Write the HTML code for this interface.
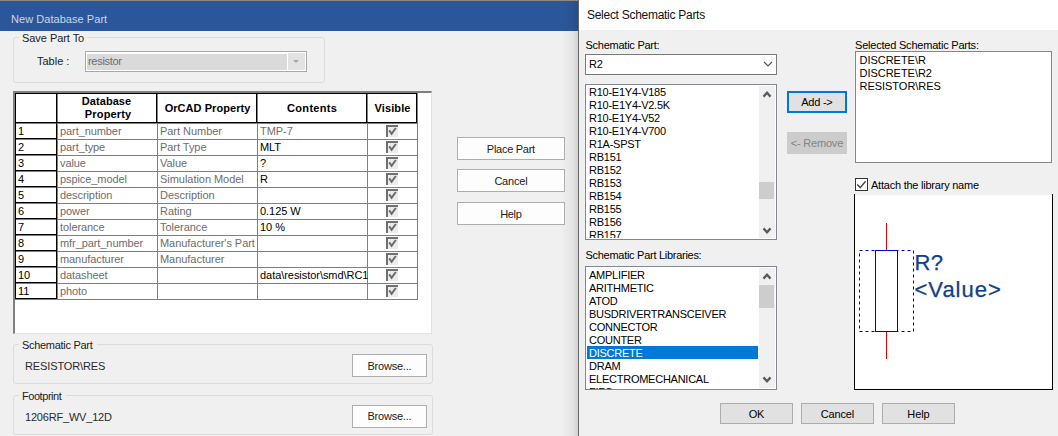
<!DOCTYPE html>
<html><head><meta charset="utf-8">
<style>
html,body{margin:0;padding:0;}
body{width:1058px;height:436px;overflow:hidden;position:relative;background:#f0f0f0;font-family:"Liberation Sans",sans-serif;font-size:11px;color:#000;}
div{position:absolute;box-sizing:border-box;}
svg{position:absolute;}
.t{white-space:nowrap;}
.gb{border:1px solid #dcdcdc;border-radius:3px;}
</style></head>
<body>

<div style="left:0px;top:0px;width:578px;height:1px;background:#8a8a8a;"></div>
<div style="left:0px;top:1px;width:578px;height:30px;background:#2b579a;"></div>
<div class="t" style="left:11px;top:12.86px;font-size:11px;color:#cdd6e5;line-height:13px;height:13px;letter-spacing:0.05px;">New Database Part</div>
<div style="left:0px;top:31px;width:578px;height:405px;background:#f0f0f0;"></div>
<div style="left:560px;top:1px;width:18px;height:435px;background:linear-gradient(to right,rgba(0,0,0,0) 0%,rgba(0,0,0,0.05) 70%,rgba(0,0,0,0.13) 100%);"></div>
<div class="gb" style="left:13px;top:37px;width:312px;height:46px;"></div>
<div style="left:19px;top:34px;width:68px;height:8px;background:#f0f0f0;"></div>
<div class="t" style="left:22px;top:31.86px;font-size:11px;color:#222;line-height:13px;height:13px;letter-spacing:-0.05px;">Save Part To</div>
<div class="t" style="left:37px;top:54.86px;font-size:11px;color:#222;line-height:13px;height:13px;letter-spacing:0px;">Table :</div>
<div style="left:85px;top:51px;width:222px;height:21px;background:#fff;border:1px solid #a9a9a9;"></div>
<div style="left:87px;top:54px;width:200px;height:16px;background:#dadada;"></div>
<div style="left:288px;top:53px;width:17px;height:17px;background:#e3e3e3;"></div>
<div style="left:293px;top:60px;width:0;height:0;border-left:3.5px solid transparent;border-right:3.5px solid transparent;border-top:3.5px solid #a8a8a8;"></div>
<div class="t" style="left:88px;top:54.86px;font-size:11px;color:#6d6d6d;line-height:13px;height:13px;letter-spacing:-0.3px;">resistor</div>
<div style="left:13px;top:91px;width:419px;height:243px;background:#fff;border-left:2px solid #808080;border-top:2px solid #808080;border-right:1px solid #e3e3e3;border-bottom:1px solid #e3e3e3;"></div>
<div style="left:15px;top:123px;width:403px;height:1px;background:#808080;"></div>
<div style="left:15px;top:139px;width:403px;height:1px;background:#808080;"></div>
<div style="left:15px;top:155px;width:403px;height:1px;background:#808080;"></div>
<div style="left:15px;top:171px;width:403px;height:1px;background:#808080;"></div>
<div style="left:15px;top:187px;width:403px;height:1px;background:#808080;"></div>
<div style="left:15px;top:203px;width:403px;height:1px;background:#808080;"></div>
<div style="left:15px;top:219px;width:403px;height:1px;background:#808080;"></div>
<div style="left:15px;top:235px;width:403px;height:1px;background:#808080;"></div>
<div style="left:15px;top:251px;width:403px;height:1px;background:#808080;"></div>
<div style="left:15px;top:267px;width:403px;height:1px;background:#808080;"></div>
<div style="left:15px;top:283px;width:403px;height:1px;background:#808080;"></div>
<div style="left:15px;top:299px;width:403px;height:1px;background:#808080;"></div>
<div style="left:57px;top:93px;width:1px;height:207px;background:#808080;"></div>
<div style="left:157px;top:93px;width:1px;height:207px;background:#808080;"></div>
<div style="left:257px;top:93px;width:1px;height:207px;background:#808080;"></div>
<div style="left:367px;top:93px;width:1px;height:207px;background:#808080;"></div>
<div style="left:417px;top:93px;width:1px;height:207px;background:#808080;"></div>
<div style="left:15px;top:93px;width:402px;height:1px;background:#000;"></div>
<div style="left:15px;top:93px;width:1px;height:206px;background:#000;"></div>
<div style="left:15px;top:122px;width:402px;height:1px;background:#000;"></div>
<div style="left:56px;top:93px;width:1px;height:30px;background:#000;"></div>
<div style="left:156px;top:93px;width:1px;height:30px;background:#000;"></div>
<div style="left:256px;top:93px;width:1px;height:30px;background:#000;"></div>
<div style="left:366px;top:93px;width:1px;height:30px;background:#000;"></div>
<div style="left:416px;top:93px;width:1px;height:30px;background:#000;"></div>
<div style="left:56px;top:123px;width:1px;height:176px;background:#000;"></div>
<div style="left:15px;top:138px;width:42px;height:1px;background:#000;"></div>
<div style="left:15px;top:154px;width:42px;height:1px;background:#000;"></div>
<div style="left:15px;top:170px;width:42px;height:1px;background:#000;"></div>
<div style="left:15px;top:186px;width:42px;height:1px;background:#000;"></div>
<div style="left:15px;top:202px;width:42px;height:1px;background:#000;"></div>
<div style="left:15px;top:218px;width:42px;height:1px;background:#000;"></div>
<div style="left:15px;top:234px;width:42px;height:1px;background:#000;"></div>
<div style="left:15px;top:250px;width:42px;height:1px;background:#000;"></div>
<div style="left:15px;top:266px;width:42px;height:1px;background:#000;"></div>
<div style="left:15px;top:282px;width:42px;height:1px;background:#000;"></div>
<div style="left:15px;top:298px;width:42px;height:1px;background:#000;"></div>
<div class="t" style="left:46.5px;width:120px;text-align:center;top:95.16px;font-size:11px;line-height:13px;height:13px;color:#000;font-weight:bold;letter-spacing:0.05px;text-indent:0.05px">Database</div>
<div class="t" style="left:48px;width:120px;text-align:center;top:108.36px;font-size:11px;line-height:13px;height:13px;color:#000;font-weight:bold;letter-spacing:0.15px;text-indent:0.15px">Property</div>
<div class="t" style="left:147.5px;width:120px;text-align:center;top:101.86px;font-size:11px;line-height:13px;height:13px;color:#000;font-weight:bold;letter-spacing:0.05px;text-indent:0.05px">OrCAD Property</div>
<div class="t" style="left:252px;width:120px;text-align:center;top:101.86px;font-size:11px;line-height:13px;height:13px;color:#000;font-weight:bold;letter-spacing:0.3px;text-indent:0.3px">Contents</div>
<div class="t" style="left:332.5px;width:120px;text-align:center;top:101.86px;font-size:11px;line-height:13px;height:13px;color:#000;font-weight:bold;letter-spacing:0.1px;text-indent:0.1px">Visible</div>
<div class="t" style="left:18px;top:124.86px;font-size:11px;color:#000;line-height:13px;height:13px;letter-spacing:0px;">1</div>
<div class="t" style="left:60px;top:124.86px;font-size:11px;color:#6d6d6d;line-height:13px;height:13px;letter-spacing:-0.08px;">part_number</div>
<div class="t" style="left:160px;top:124.86px;font-size:11px;color:#6d6d6d;line-height:13px;height:13px;letter-spacing:-0.04px;">Part Number</div>
<div class="t" style="left:260px;top:124.86px;font-size:11px;color:#6d6d6d;line-height:13px;height:13px;letter-spacing:-0.05px;">TMP-7</div>
<div style="left:386px;top:125px;width:12px;height:12px;background:#ececec;border-left:2px solid #707070;border-top:2px solid #707070;"></div>
<svg style="left:386px;top:125px" width="12" height="12"><path d="M3.2 5.2 L5.6 8.8 L9.8 3" stroke="#6a6a6a" stroke-width="2" fill="none"/></svg>
<div class="t" style="left:18px;top:140.86px;font-size:11px;color:#000;line-height:13px;height:13px;letter-spacing:0px;">2</div>
<div class="t" style="left:60px;top:140.86px;font-size:11px;color:#6d6d6d;line-height:13px;height:13px;letter-spacing:-0.08px;">part_type</div>
<div class="t" style="left:160px;top:140.86px;font-size:11px;color:#6d6d6d;line-height:13px;height:13px;letter-spacing:-0.04px;">Part Type</div>
<div class="t" style="left:260px;top:140.86px;font-size:11px;color:#000;line-height:13px;height:13px;letter-spacing:-0.05px;">MLT</div>
<div style="left:386px;top:141px;width:12px;height:12px;background:#ececec;border-left:2px solid #707070;border-top:2px solid #707070;"></div>
<svg style="left:386px;top:141px" width="12" height="12"><path d="M3.2 5.2 L5.6 8.8 L9.8 3" stroke="#6a6a6a" stroke-width="2" fill="none"/></svg>
<div class="t" style="left:18px;top:156.86px;font-size:11px;color:#000;line-height:13px;height:13px;letter-spacing:0px;">3</div>
<div class="t" style="left:60px;top:156.86px;font-size:11px;color:#6d6d6d;line-height:13px;height:13px;letter-spacing:-0.08px;">value</div>
<div class="t" style="left:160px;top:156.86px;font-size:11px;color:#6d6d6d;line-height:13px;height:13px;letter-spacing:-0.04px;">Value</div>
<div class="t" style="left:260px;top:156.86px;font-size:11px;color:#000;line-height:13px;height:13px;letter-spacing:-0.05px;">?</div>
<div style="left:386px;top:157px;width:12px;height:12px;background:#ececec;border-left:2px solid #707070;border-top:2px solid #707070;"></div>
<svg style="left:386px;top:157px" width="12" height="12"><path d="M3.2 5.2 L5.6 8.8 L9.8 3" stroke="#6a6a6a" stroke-width="2" fill="none"/></svg>
<div class="t" style="left:18px;top:172.86px;font-size:11px;color:#000;line-height:13px;height:13px;letter-spacing:0px;">4</div>
<div class="t" style="left:60px;top:172.86px;font-size:11px;color:#6d6d6d;line-height:13px;height:13px;letter-spacing:-0.08px;">pspice_model</div>
<div class="t" style="left:160px;top:172.86px;font-size:11px;color:#6d6d6d;line-height:13px;height:13px;letter-spacing:-0.04px;">Simulation Model</div>
<div class="t" style="left:260px;top:172.86px;font-size:11px;color:#000;line-height:13px;height:13px;letter-spacing:-0.05px;">R</div>
<div style="left:386px;top:173px;width:12px;height:12px;background:#ececec;border-left:2px solid #707070;border-top:2px solid #707070;"></div>
<svg style="left:386px;top:173px" width="12" height="12"><path d="M3.2 5.2 L5.6 8.8 L9.8 3" stroke="#6a6a6a" stroke-width="2" fill="none"/></svg>
<div class="t" style="left:18px;top:188.86px;font-size:11px;color:#000;line-height:13px;height:13px;letter-spacing:0px;">5</div>
<div class="t" style="left:60px;top:188.86px;font-size:11px;color:#6d6d6d;line-height:13px;height:13px;letter-spacing:-0.08px;">description</div>
<div class="t" style="left:160px;top:188.86px;font-size:11px;color:#6d6d6d;line-height:13px;height:13px;letter-spacing:-0.04px;">Description</div>
<div style="left:386px;top:189px;width:12px;height:12px;background:#ececec;border-left:2px solid #707070;border-top:2px solid #707070;"></div>
<svg style="left:386px;top:189px" width="12" height="12"><path d="M3.2 5.2 L5.6 8.8 L9.8 3" stroke="#6a6a6a" stroke-width="2" fill="none"/></svg>
<div class="t" style="left:18px;top:204.86px;font-size:11px;color:#000;line-height:13px;height:13px;letter-spacing:0px;">6</div>
<div class="t" style="left:60px;top:204.86px;font-size:11px;color:#6d6d6d;line-height:13px;height:13px;letter-spacing:-0.08px;">power</div>
<div class="t" style="left:160px;top:204.86px;font-size:11px;color:#6d6d6d;line-height:13px;height:13px;letter-spacing:-0.04px;">Rating</div>
<div class="t" style="left:260px;top:204.86px;font-size:11px;color:#000;line-height:13px;height:13px;letter-spacing:-0.05px;">0.125 W</div>
<div style="left:386px;top:205px;width:12px;height:12px;background:#ececec;border-left:2px solid #707070;border-top:2px solid #707070;"></div>
<svg style="left:386px;top:205px" width="12" height="12"><path d="M3.2 5.2 L5.6 8.8 L9.8 3" stroke="#6a6a6a" stroke-width="2" fill="none"/></svg>
<div class="t" style="left:18px;top:220.86px;font-size:11px;color:#000;line-height:13px;height:13px;letter-spacing:0px;">7</div>
<div class="t" style="left:60px;top:220.86px;font-size:11px;color:#6d6d6d;line-height:13px;height:13px;letter-spacing:-0.08px;">tolerance</div>
<div class="t" style="left:160px;top:220.86px;font-size:11px;color:#6d6d6d;line-height:13px;height:13px;letter-spacing:-0.04px;">Tolerance</div>
<div class="t" style="left:260px;top:220.86px;font-size:11px;color:#000;line-height:13px;height:13px;letter-spacing:-0.05px;">10 %</div>
<div style="left:386px;top:221px;width:12px;height:12px;background:#ececec;border-left:2px solid #707070;border-top:2px solid #707070;"></div>
<svg style="left:386px;top:221px" width="12" height="12"><path d="M3.2 5.2 L5.6 8.8 L9.8 3" stroke="#6a6a6a" stroke-width="2" fill="none"/></svg>
<div class="t" style="left:18px;top:236.86px;font-size:11px;color:#000;line-height:13px;height:13px;letter-spacing:0px;">8</div>
<div class="t" style="left:60px;top:236.86px;font-size:11px;color:#6d6d6d;line-height:13px;height:13px;letter-spacing:-0.08px;">mfr_part_number</div>
<div class="t" style="left:160px;top:236.86px;font-size:11px;color:#6d6d6d;line-height:13px;height:13px;letter-spacing:-0.04px;">Manufacturer's Part</div>
<div style="left:386px;top:237px;width:12px;height:12px;background:#ececec;border-left:2px solid #707070;border-top:2px solid #707070;"></div>
<svg style="left:386px;top:237px" width="12" height="12"><path d="M3.2 5.2 L5.6 8.8 L9.8 3" stroke="#6a6a6a" stroke-width="2" fill="none"/></svg>
<div class="t" style="left:18px;top:252.86px;font-size:11px;color:#000;line-height:13px;height:13px;letter-spacing:0px;">9</div>
<div class="t" style="left:60px;top:252.86px;font-size:11px;color:#6d6d6d;line-height:13px;height:13px;letter-spacing:-0.08px;">manufacturer</div>
<div class="t" style="left:160px;top:252.86px;font-size:11px;color:#6d6d6d;line-height:13px;height:13px;letter-spacing:-0.04px;">Manufacturer</div>
<div style="left:386px;top:253px;width:12px;height:12px;background:#ececec;border-left:2px solid #707070;border-top:2px solid #707070;"></div>
<svg style="left:386px;top:253px" width="12" height="12"><path d="M3.2 5.2 L5.6 8.8 L9.8 3" stroke="#6a6a6a" stroke-width="2" fill="none"/></svg>
<div class="t" style="left:18px;top:268.86px;font-size:11px;color:#000;line-height:13px;height:13px;letter-spacing:0px;">10</div>
<div class="t" style="left:60px;top:268.86px;font-size:11px;color:#6d6d6d;line-height:13px;height:13px;letter-spacing:-0.08px;">datasheet</div>
<div class="t" style="left:260px;top:268.86px;font-size:11px;color:#000;line-height:13px;height:13px;letter-spacing:-0.05px;">data\resistor\smd\RC1</div>
<div style="left:386px;top:269px;width:12px;height:12px;background:#ececec;border-left:2px solid #707070;border-top:2px solid #707070;"></div>
<svg style="left:386px;top:269px" width="12" height="12"><path d="M3.2 5.2 L5.6 8.8 L9.8 3" stroke="#6a6a6a" stroke-width="2" fill="none"/></svg>
<div class="t" style="left:18px;top:284.86px;font-size:11px;color:#000;line-height:13px;height:13px;letter-spacing:0px;">11</div>
<div class="t" style="left:60px;top:284.86px;font-size:11px;color:#6d6d6d;line-height:13px;height:13px;letter-spacing:-0.08px;">photo</div>
<div style="left:386px;top:285px;width:12px;height:12px;background:#ececec;border-left:2px solid #707070;border-top:2px solid #707070;"></div>
<svg style="left:386px;top:285px" width="12" height="12"><path d="M3.2 5.2 L5.6 8.8 L9.8 3" stroke="#6a6a6a" stroke-width="2" fill="none"/></svg>
<div style="left:457px;top:137px;width:108px;height:23px;background:#fdfdfd;border:1px solid #adadad;"></div>
<div class="t" style="left:457px;width:108px;text-align:center;top:143.06px;font-size:11px;line-height:13px;height:13px;color:#222;letter-spacing:-0.27px;text-indent:-0.27px">Place Part</div>
<div style="left:457px;top:169px;width:108px;height:23px;background:#fdfdfd;border:1px solid #adadad;"></div>
<div class="t" style="left:457px;width:108px;text-align:center;top:174.86px;font-size:11px;line-height:13px;height:13px;color:#222;letter-spacing:-0.2px;text-indent:-0.2px">Cancel</div>
<div style="left:457px;top:202px;width:108px;height:23px;background:#fdfdfd;border:1px solid #adadad;"></div>
<div class="t" style="left:457px;width:108px;text-align:center;top:207.66px;font-size:11px;line-height:13px;height:13px;color:#222;letter-spacing:-0.35px;text-indent:-0.35px">Help</div>
<div class="gb" style="left:13px;top:344px;width:420px;height:40px;"></div>
<div style="left:19px;top:340px;width:78px;height:8px;background:#f0f0f0;"></div>
<div class="t" style="left:22px;top:338.56px;font-size:11px;color:#222;line-height:13px;height:13px;letter-spacing:-0.3px;">Schematic Part</div>
<div class="t" style="left:25px;top:360.46px;font-size:11px;color:#2a2a2a;line-height:13px;height:13px;letter-spacing:-0.12px;">RESISTOR\RES</div>
<div style="left:352px;top:354px;width:75px;height:23px;background:#fdfdfd;border:1px solid #adadad;"></div>
<div class="t" style="left:352px;width:75px;text-align:center;top:359.66px;font-size:11px;line-height:13px;height:13px;color:#222;letter-spacing:-0.22px;text-indent:-0.22px">Browse...</div>
<div class="gb" style="left:13px;top:395px;width:420px;height:40px;"></div>
<div style="left:19px;top:391px;width:47px;height:8px;background:#f0f0f0;"></div>
<div class="t" style="left:22px;top:389.56px;font-size:11px;color:#222;line-height:13px;height:13px;letter-spacing:-0.45px;">Footprint</div>
<div class="t" style="left:25px;top:411.06px;font-size:11px;color:#2a2a2a;line-height:13px;height:13px;letter-spacing:-0.19px;">1206RF_WV_12D</div>
<div style="left:352px;top:405px;width:75px;height:23px;background:#fdfdfd;border:1px solid #adadad;"></div>
<div class="t" style="left:352px;width:75px;text-align:center;top:410.36px;font-size:11px;line-height:13px;height:13px;color:#222;letter-spacing:-0.22px;text-indent:-0.22px">Browse...</div>
<div style="left:578px;top:0px;width:1px;height:436px;background:#686868;"></div>
<div style="left:579px;top:0px;width:479px;height:30px;background:#fff;"></div>
<div style="left:579px;top:30px;width:479px;height:406px;background:#f0f0f0;"></div>
<div class="t" style="left:587px;top:9.03px;font-size:12px;color:#111;line-height:13px;height:13px;letter-spacing:-0.28px;">Select Schematic Parts</div>
<div class="t" style="left:585.5px;top:38.56px;font-size:11px;color:#000;line-height:13px;height:13px;letter-spacing:-0.25px;">Schematic Part:</div>
<div style="left:585px;top:54px;width:192px;height:21px;background:#fff;border:1px solid #7a7a7a;"></div>
<div class="t" style="left:589px;top:57.66px;font-size:11px;color:#000;line-height:13px;height:13px;letter-spacing:-0.25px;">R2</div>
<svg style="left:763px;top:61px" width="11" height="7"><path d="M1 1 L5 5 L9 1" stroke="#505050" stroke-width="1.1" fill="none"/></svg>
<div style="left:585px;top:84px;width:192px;height:156px;background:#fff;border:1px solid #828790;"></div>
<div style="left:586px;top:85px;width:173px;height:153px;overflow:hidden;">
<div class="t" style="left:3px;top:1.46px;line-height:13px;height:13px;letter-spacing:-0.25px">R10-E1Y4-V185</div>
<div class="t" style="left:3px;top:14.46px;line-height:13px;height:13px;letter-spacing:-0.25px">R10-E1Y4-V2.5K</div>
<div class="t" style="left:3px;top:27.46px;line-height:13px;height:13px;letter-spacing:-0.25px">R10-E1Y4-V52</div>
<div class="t" style="left:3px;top:40.46px;line-height:13px;height:13px;letter-spacing:-0.25px">R10-E1Y4-V700</div>
<div class="t" style="left:3px;top:53.46px;line-height:13px;height:13px;letter-spacing:-0.25px">R1A-SPST</div>
<div class="t" style="left:3px;top:66.46px;line-height:13px;height:13px;letter-spacing:-0.25px">RB151</div>
<div class="t" style="left:3px;top:79.46px;line-height:13px;height:13px;letter-spacing:-0.25px">RB152</div>
<div class="t" style="left:3px;top:92.46px;line-height:13px;height:13px;letter-spacing:-0.25px">RB153</div>
<div class="t" style="left:3px;top:105.46px;line-height:13px;height:13px;letter-spacing:-0.25px">RB154</div>
<div class="t" style="left:3px;top:118.46px;line-height:13px;height:13px;letter-spacing:-0.25px">RB155</div>
<div class="t" style="left:3px;top:131.46px;line-height:13px;height:13px;letter-spacing:-0.25px">RB156</div>
<div class="t" style="left:3px;top:144.46px;line-height:13px;height:13px;letter-spacing:-0.25px">RB157</div>
</div>
<div style="left:759px;top:86px;width:16px;height:152px;background:#f0f0f0;"></div>
<div style="left:759px;top:182px;width:15px;height:17px;background:#cdcdcd;"></div>
<svg style="left:762px;top:90px" width="10" height="9"><path d="M1.5 6.6 L5 2.8 L8.5 6.6" stroke="#5a5a5a" stroke-width="2.3" fill="none"/></svg>
<svg style="left:762px;top:225.5px" width="10" height="9"><path d="M1.5 2.4 L5 6.2 L8.5 2.4" stroke="#5a5a5a" stroke-width="2.3" fill="none"/></svg>
<div style="left:787px;top:91px;width:60px;height:22px;background:#e1e1e1;border:2px solid #0078d7;"></div>
<div class="t" style="left:787px;width:60px;text-align:center;top:95.86px;font-size:11px;line-height:13px;height:13px;color:#000;letter-spacing:-0.25px;text-indent:-0.25px">Add -&gt;</div>
<div style="left:787px;top:132px;width:60px;height:22px;background:#cccccc;border:1px solid #cccccc;"></div>
<div class="t" style="left:787px;width:60px;text-align:center;top:136.86px;font-size:11px;line-height:13px;height:13px;color:#838383;letter-spacing:-0.2px;text-indent:-0.2px">&lt;- Remove</div>
<div class="t" style="left:585.5px;top:249.36px;font-size:11px;color:#000;line-height:13px;height:13px;letter-spacing:-0.28px;">Schematic Part Libraries:</div>
<div style="left:585px;top:266px;width:192px;height:124px;background:#fff;border:1px solid #828790;"></div>
<div style="left:586px;top:267px;width:173px;height:122px;overflow:hidden;">
<div class="t" style="left:3px;top:1.56px;line-height:13px;height:13px;letter-spacing:-0.25px">AMPLIFIER</div>
<div class="t" style="left:3px;top:14.56px;line-height:13px;height:13px;letter-spacing:-0.25px">ARITHMETIC</div>
<div class="t" style="left:3px;top:27.56px;line-height:13px;height:13px;letter-spacing:-0.25px">ATOD</div>
<div class="t" style="left:3px;top:40.56px;line-height:13px;height:13px;letter-spacing:-0.25px">BUSDRIVERTRANSCEIVER</div>
<div class="t" style="left:3px;top:53.56px;line-height:13px;height:13px;letter-spacing:-0.25px">CONNECTOR</div>
<div class="t" style="left:3px;top:66.56px;line-height:13px;height:13px;letter-spacing:-0.25px">COUNTER</div>
<div style="left:1px;top:79px;width:171px;height:13px;background:#0078d7;"></div>
<div class="t" style="left:3px;top:79.56px;line-height:13px;height:13px;color:#fff;letter-spacing:-0.25px">DISCRETE</div>
<div class="t" style="left:3px;top:92.56px;line-height:13px;height:13px;letter-spacing:-0.25px">DRAM</div>
<div class="t" style="left:3px;top:105.56px;line-height:13px;height:13px;letter-spacing:-0.25px">ELECTROMECHANICAL</div>
<div class="t" style="left:3px;top:118.56px;line-height:13px;height:13px;letter-spacing:-0.25px">FIFO</div>
</div>
<div style="left:759px;top:268px;width:16px;height:120px;background:#f0f0f0;"></div>
<div style="left:759px;top:285px;width:15px;height:23px;background:#cdcdcd;"></div>
<svg style="left:762px;top:272px" width="10" height="9"><path d="M1.5 6.6 L5 2.8 L8.5 6.6" stroke="#5a5a5a" stroke-width="2.3" fill="none"/></svg>
<svg style="left:762px;top:375px" width="10" height="9"><path d="M1.5 2.4 L5 6.2 L8.5 2.4" stroke="#5a5a5a" stroke-width="2.3" fill="none"/></svg>
<div class="t" style="left:855px;top:38.56px;font-size:11px;color:#000;line-height:13px;height:13px;letter-spacing:-0.21px;">Selected Schematic Parts:</div>
<div style="left:855px;top:51px;width:197px;height:112px;background:#fff;border:1px solid #828790;"></div>
<div class="t" style="left:859.5px;top:53.66px;font-size:11px;color:#000;line-height:13px;height:13px;letter-spacing:-0.03px;">DISCRETE\R</div>
<div class="t" style="left:859.5px;top:66.66px;font-size:11px;color:#000;line-height:13px;height:13px;letter-spacing:-0.03px;">DISCRETE\R2</div>
<div class="t" style="left:859.5px;top:79.66px;font-size:11px;color:#000;line-height:13px;height:13px;letter-spacing:-0.03px;">RESISTOR\RES</div>
<div style="left:855px;top:178px;width:13px;height:13px;background:#fff;border:1px solid #333;"></div>
<svg style="left:855px;top:178px" width="13" height="13"><path d="M2.2 6.6 L5.2 9.6 L10.6 3.2" stroke="#444" stroke-width="1.4" fill="none"/></svg>
<div class="t" style="left:871px;top:178.86px;font-size:11px;color:#000;line-height:13px;height:13px;letter-spacing:-0.23px;">Attach the library name</div>
<div style="left:854px;top:195px;width:199px;height:195px;background:#fff;border-left:1px solid #000;border-right:1px solid #000;border-bottom:1px solid #000;"></div>
<div style="left:854px;top:194px;width:1px;height:1px;background:#000;"></div>
<div style="left:1052px;top:194px;width:1px;height:1px;background:#000;"></div>
<svg style="left:854px;top:194px" width="199" height="195">
<line x1="32.5" y1="29" x2="32.5" y2="56" stroke="#e00000" stroke-width="1"/>
<line x1="32.5" y1="137" x2="32.5" y2="165" stroke="#e00000" stroke-width="1"/>
<rect x="21.5" y="56.5" width="22" height="81" stroke="#0000e0" stroke-width="1" fill="none"/>
<rect x="5.5" y="56.5" width="54" height="81" stroke="#0000e0" stroke-width="1" stroke-dasharray="3,3" fill="none"/>
</svg>
<div class="t" style="left:914.5px;top:250.23px;font-size:22px;color:#0f408a;line-height:26px;height:26px;letter-spacing:0.4px;-webkit-text-stroke:0.25px #0f408a;">R?</div>
<div class="t" style="left:914.5px;top:276.73px;font-size:22px;color:#0f408a;line-height:26px;height:26px;letter-spacing:1.0px;-webkit-text-stroke:0.25px #0f408a;">&lt;Value&gt;</div>
<div style="left:720px;top:403px;width:73px;height:21px;background:#e1e1e1;border:1px solid #adadad;"></div>
<div class="t" style="left:720px;width:73px;text-align:center;top:407.66px;font-size:11px;line-height:13px;height:13px;color:#000;letter-spacing:-0.3px;text-indent:-0.3px">OK</div>
<div style="left:801px;top:403px;width:73px;height:21px;background:#e1e1e1;border:1px solid #adadad;"></div>
<div class="t" style="left:801px;width:73px;text-align:center;top:407.66px;font-size:11px;line-height:13px;height:13px;color:#000;letter-spacing:-0.12px;text-indent:-0.12px">Cancel</div>
<div style="left:882px;top:403px;width:73px;height:21px;background:#e1e1e1;border:1px solid #adadad;"></div>
<div class="t" style="left:882px;width:73px;text-align:center;top:407.66px;font-size:11px;line-height:13px;height:13px;color:#000;letter-spacing:-0.1px;text-indent:-0.1px">Help</div>
</body></html>
